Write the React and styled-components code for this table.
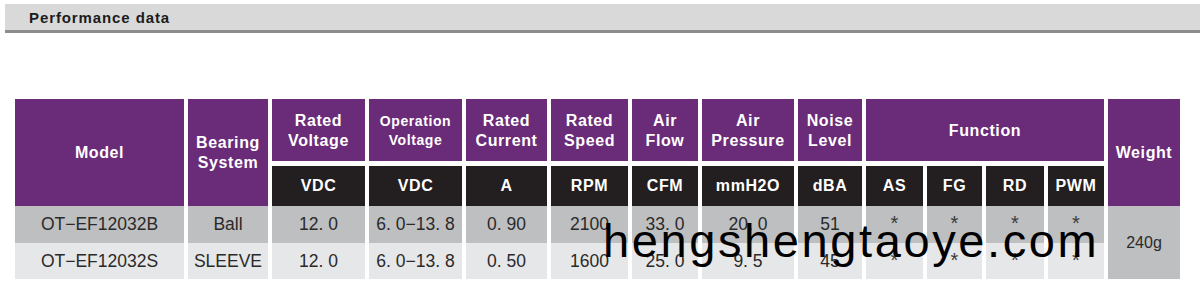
import React from "react";
import styled, { createGlobalStyle } from "styled-components";

const GlobalStyle = createGlobalStyle`
  body {
    margin: 0;
    background: #ffffff;
    font-family: "Liberation Sans", Arial, sans-serif;
  }
`;

const Page = styled.div`
  position: relative;
  width: 1200px;
  height: 285px;
  padding-top: 4px;
  box-sizing: border-box;
  overflow: hidden;
`;

const TitleBar = styled.div`
  margin-left: 5px;
  height: 26px;
  background: #d9d9d9;
  border-bottom: 3px solid #8c8c8c;
  display: flex;
  align-items: center;
  padding-left: 24px;
  font-size: 15px;
  font-weight: bold;
  letter-spacing: 0.9px;
  color: #1c1c1c;
`;

const Table = styled.div`
  margin: 66px 0 0 15px;
  display: grid;
  grid-template-columns: 169px 80px 93px 93px 81px 77px 66px 92px 64px 57px 55px 58px 56px 72px;
  grid-template-rows: 62px 5px 40px 37px 36px;
  column-gap: 4px;
`;

const Cell = styled.div`
  grid-column: ${(p) => p.$col};
  display: flex;
  align-items: center;
  justify-content: center;
  text-align: center;
  box-sizing: border-box;
`;

const Head = styled(Cell)`
  grid-row: ${(p) => (p.$span ? "1 / 4" : "1")};
  background: #6a2b79;
  color: #ffffff;
  font-weight: bold;
  font-size: ${(p) => p.$size || 16}px;
  line-height: ${(p) => (p.$size ? 19 : 20)}px;
  letter-spacing: 0.6px;
  padding-top: ${(p) => (p.$span ? 0 : 2)}px;
`;

const Unit = styled(Cell)`
  grid-row: 3;
  background: #231f20;
  color: #ffffff;
  font-weight: bold;
  font-size: 16px;
  letter-spacing: 0.6px;
`;

const Data = styled(Cell)`
  grid-row: ${(p) => p.$row};
  background: ${(p) => (p.$row === 4 ? "#bebfc1" : "#e6e7e8")};
  color: #2a2a2a;
  font-size: 17.5px;
`;

const Star = styled(Data)`
  align-items: flex-start;
  padding-top: 6px;
  font-size: 20px;
  color: #3a3a3a;
`;

const Weight = styled(Cell)`
  grid-row: 4 / 6;
  background: #bebfc1;
  color: #2a2a2a;
  font-size: 16px;
`;

const Watermark = styled.div`
  position: absolute;
  left: 603px;
  top: 213px;
  font-size: 47px;
  letter-spacing: 2.6px;
  color: #000000;
  line-height: 56px;
  white-space: nowrap;
  pointer-events: none;
`;

const heads = [
  ["Rated", "Voltage"],
  ["Operation", "Voltage"],
  ["Rated", "Current"],
  ["Rated", "Speed"],
  ["Air", "Flow"],
  ["Air", "Pressure"],
  ["Noise", "Level"],
];

const units = ["VDC", "VDC", "A", "RPM", "CFM", "mmH2O", "dBA", "AS", "FG", "RD", "PWM"];

const rows = [
  ["OT−EF12032B", "Ball", "12. 0", "6. 0−13. 8", "0. 90", "2100", "33. 0", "20. 0", "51"],
  ["OT−EF12032S", "SLEEVE", "12. 0", "6. 0−13. 8", "0. 50", "1600", "25. 0", "9. 5", "45"],
];

export default function App() {
  return (
    <Page>
      <GlobalStyle />
      <TitleBar>Performance data</TitleBar>
      <Table>
        <Head $span $col={1}>Model</Head>
        <Head $span $col={2}>
          Bearing
          <br />
          System
        </Head>
        {heads.map(([a, b], i) => (
          <Head key={a + b} $col={i + 3} $size={a === "Operation" ? 14 : undefined}>
            {a}
            <br />
            {b}
          </Head>
        ))}
        <Head $col="10 / 14">Function</Head>
        <Head $span $col={14}>Weight</Head>
        {units.map((u, i) => (
          <Unit key={i} $col={i + 3}>
            {u}
          </Unit>
        ))}
        {rows.map((r, ri) => (
          <React.Fragment key={ri}>
            {r.map((v, ci) => (
              <Data key={ci} $row={ri + 4} $col={ci + 1}>
                {v}
              </Data>
            ))}
            {[10, 11, 12, 13].map((c) => (
              <Star key={c} $row={ri + 4} $col={c}>
                *
              </Star>
            ))}
          </React.Fragment>
        ))}
        <Weight $col={14}>240g</Weight>
      </Table>
      <Watermark>hengshengtaoye.com</Watermark>
    </Page>
  );
}
